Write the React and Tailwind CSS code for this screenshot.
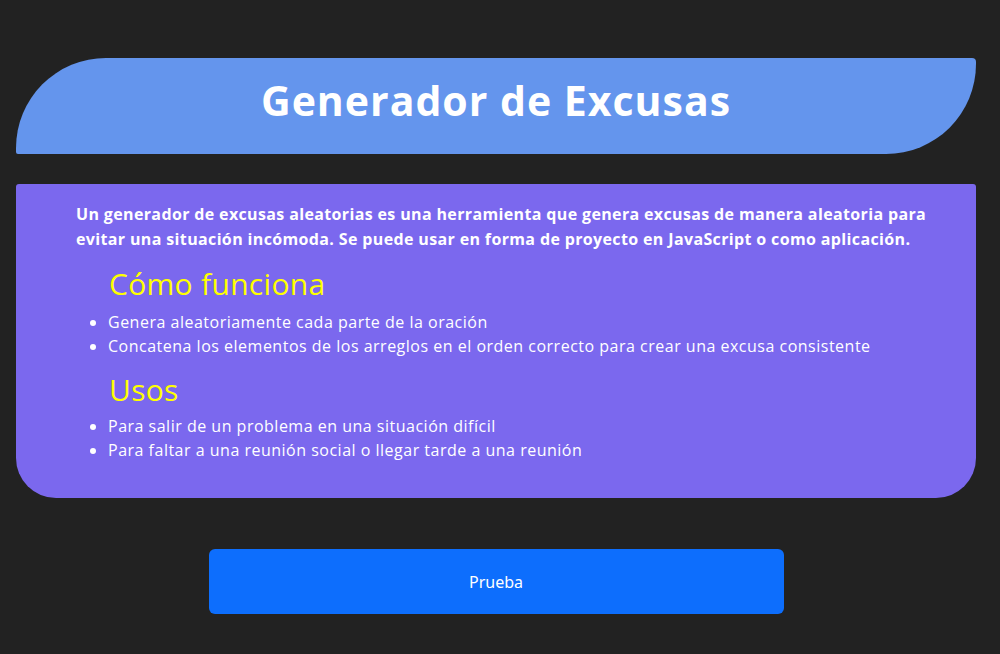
export default function App() {
  const funciona = [
    "Genera aleatoriamente cada parte de la oración",
    "Concatena los elementos de los arreglos en el orden correcto para crear una excusa consistente",
  ]
  const usos = [
    "Para salir de un problema en una situación difícil",
    "Para faltar a una reunión social o llegar tarde a una reunión",
  ]

  return (
    <div className="min-h-[654px] bg-[#222222] font-['Open_Sans',sans-serif] text-white">
      <div className="ml-4 w-[960px] pt-[58px]">
        {/* Header */}
        <header className="flex h-[96px] items-center justify-center rounded-tl-[90px] rounded-tr-[4px] rounded-br-[90px] rounded-bl-[2px] bg-[#6495ed] pb-[10px]">
          <h1 className="text-[41px] font-bold leading-[1.2] tracking-[1px]">Generador de Excusas</h1>
        </header>

        {/* Descripción */}
        <section className="mt-[30px] rounded-t-[3px] rounded-b-[40px] bg-[#7b68ee] pt-[18px] pr-[40px] pb-[36px] pl-[60px]">
          <p className="text-[16px] font-bold leading-[25px] tracking-[0.36px]">
            Un generador de excusas aleatorias es una herramienta que genera excusas de manera aleatoria para
            evitar una situación incómoda. Se puede usar en forma de proyecto en JavaScript o como aplicación.
          </p>

          <h2 className="mt-[14px] ml-[33px] text-[30px] leading-[36px] tracking-[0.3px] text-[#ffff00]">
            Cómo funciona
          </h2>
          <ul className="mt-[8px] list-disc pl-[32px] text-[16px] leading-[24px] tracking-[0.5px]">
            {funciona.map((item) => (
              <li key={item}>{item}</li>
            ))}
          </ul>

          <h2 className="mt-[14px] ml-[33px] text-[30px] leading-[36px] tracking-[0.3px] text-[#ffff00]">Usos</h2>
          <ul className="mt-[6px] list-disc pl-[32px] text-[16px] leading-[24px] tracking-[0.5px]">
            {usos.map((item) => (
              <li key={item}>{item}</li>
            ))}
          </ul>
        </section>

        {/* Botón */}
        <div className="mt-[51px] flex justify-center">
          <button className="h-[65px] w-[575px] rounded-[6px] bg-[#0d6efd] font-['Noto_Sans',sans-serif] text-[16px] text-white">
            Prueba
          </button>
        </div>
      </div>
    </div>
  )
}
